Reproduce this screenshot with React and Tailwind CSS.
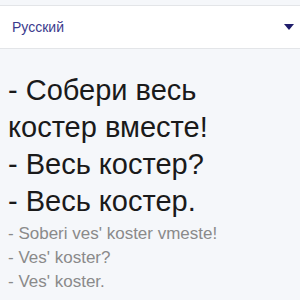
const lines = ['- Собери весь костер вместе!', '- Весь костер?', '- Весь костер.']
const translit = ["- Soberi ves' koster vmeste!", "- Ves' koster?", "- Ves' koster."]

const App = () => {
  return (
    <div className="min-h-[300px] w-[300px] overflow-hidden bg-[#f5f7fa] font-['Liberation_Sans',Arial,sans-serif]">
      <div className="h-[5px]" />
      <div className="flex h-[44px] items-center justify-between border-y border-[#e3e5e8] bg-white pl-3 pr-[6px]">
        <span className="text-[14px] text-[#3b3a8c]">Русский</span>
        <svg viewBox="0 0 10 6" className="h-[6px] w-[10px]">
          <path d="M0 0h10L5 6z" fill="#1f1d6b" />
        </svg>
      </div>
      <div className="px-2 pt-[23px]">
        {lines.map((line) => (
          <p key={line} className="text-[29px] leading-[37px] text-[#1a1a1a]">
            {line}
          </p>
        ))}
        <div className="mt-[2px]">
          {translit.map((line) => (
            <p key={line} className="text-[17px] leading-[24px] text-[#8a8a8a]">
              {line}
            </p>
          ))}
        </div>
      </div>
    </div>
  )
}

export default App
